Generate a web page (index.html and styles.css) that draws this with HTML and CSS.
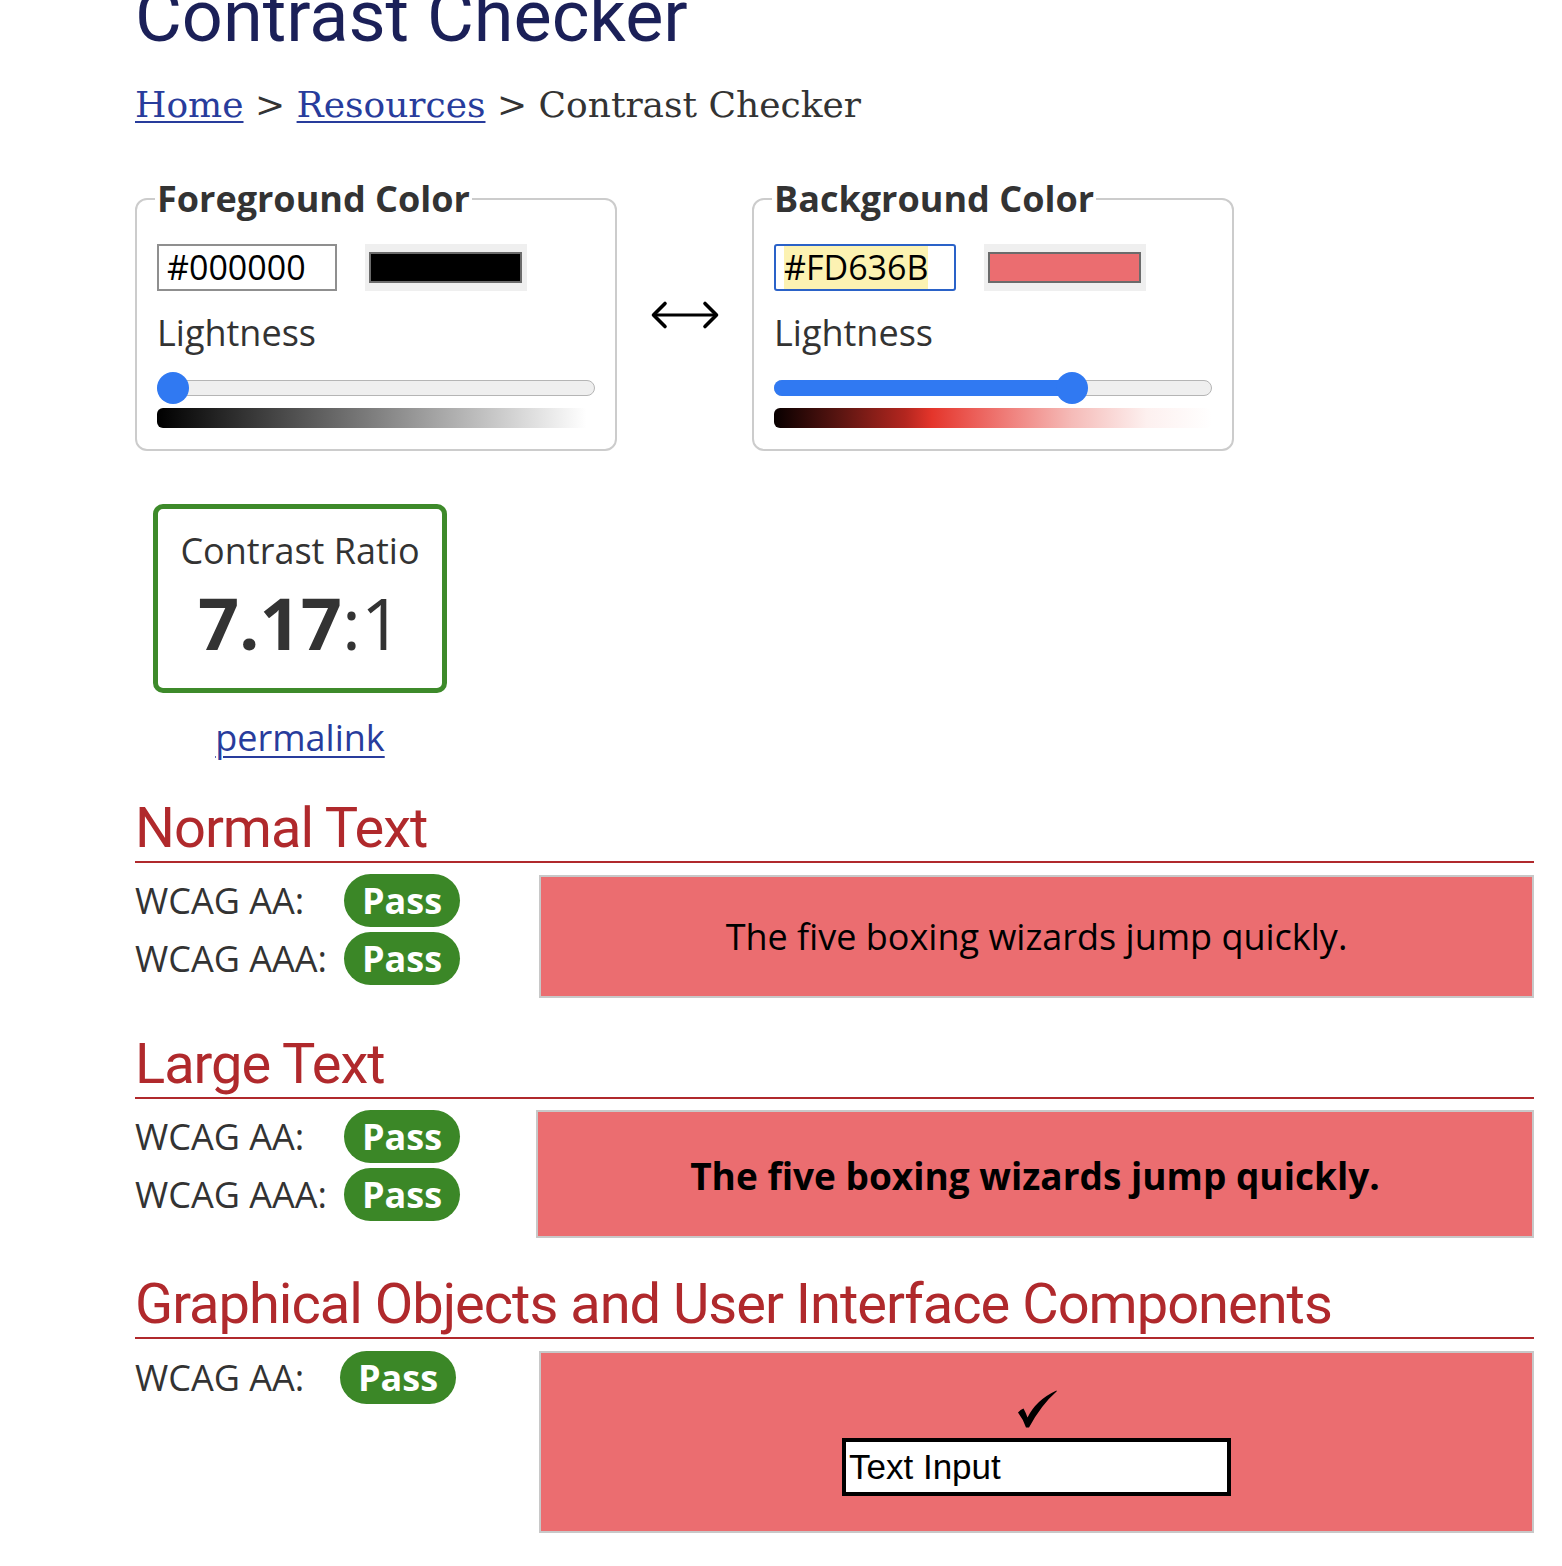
FILE: index.html
```html
<!DOCTYPE html>
<html lang="en">
<head>
<meta charset="utf-8">
<title>Contrast Checker</title>
<link rel="stylesheet" href="styles.css">
</head>
<body>
<main class="page">
  <h1 class="title">Contrast Checker</h1>
  <nav class="crumbs"><a href="#">Home</a> &gt; <a href="#">Resources</a> &gt; Contrast Checker</nav>

  <div class="pickers">
    <fieldset class="picker">
      <legend>Foreground Color</legend>
      <div class="color-row">
        <div class="hex">#000000</div>
        <div class="swatch-wrap"><span class="swatch" style="background:#000000"></span></div>
      </div>
      <div class="lightness-label">Lightness</div>
      <div class="slider">
        <div class="track"></div>
        <div class="thumb" style="left:0px"></div>
      </div>
      <div class="gradient gradient--fg"></div>
    </fieldset>

    <div class="swap">
      <svg width="70" height="30" viewBox="0 0 70 30" aria-hidden="true">
        <path d="M4 15 H66" fill="none" stroke="#000" stroke-width="3.2"/>
        <path d="M15 3.5 L3.5 15 L15 26.5" fill="none" stroke="#000" stroke-width="3.6" stroke-linecap="round" stroke-linejoin="round"/>
        <path d="M55 3.5 L66.5 15 L55 26.5" fill="none" stroke="#000" stroke-width="3.6" stroke-linecap="round" stroke-linejoin="round"/>
      </svg>
    </div>

    <fieldset class="picker">
      <legend>Background Color</legend>
      <div class="color-row">
        <div class="hex hex--focus"><span class="hex-sel">#FD636B</span></div>
        <div class="swatch-wrap"><span class="swatch" style="background:#eb6d70"></span></div>
      </div>
      <div class="lightness-label">Lightness</div>
      <div class="slider">
        <div class="track"></div>
        <div class="fill" style="width:298px"></div>
        <div class="thumb" style="left:282px"></div>
      </div>
      <div class="gradient gradient--bg"></div>
    </fieldset>
  </div>

  <div class="ratio-block">
    <div class="ratio-box">
      <div class="ratio-label">Contrast Ratio</div>
      <div class="ratio-value"><b>7.17</b>:1</div>
    </div>
    <a class="permalink" href="#">permalink</a>
  </div>

  <section class="result">
    <h2 class="result-title">Normal Text</h2>
    <div class="result-body">
      <div class="checks">
        <div class="check"><span class="check-label">WCAG AA:</span><span class="badge">Pass</span></div>
        <div class="check"><span class="check-label">WCAG AAA:</span><span class="badge">Pass</span></div>
      </div>
      <div class="sample sample--normal">The five boxing wizards jump quickly.</div>
    </div>
  </section>

  <section class="result result--large">
    <h2 class="result-title">Large Text</h2>
    <div class="result-body">
      <div class="checks">
        <div class="check"><span class="check-label">WCAG AA:</span><span class="badge">Pass</span></div>
        <div class="check"><span class="check-label">WCAG AAA:</span><span class="badge">Pass</span></div>
      </div>
      <div class="sample sample--large">The five boxing wizards jump quickly.</div>
    </div>
  </section>

  <section class="result result--ui">
    <h2 class="result-title">Graphical Objects and User Interface Components</h2>
    <div class="result-body">
      <div class="checks">
        <div class="check"><span class="check-label">WCAG AA:</span><span class="badge">Pass</span></div>
      </div>
      <div class="sample sample--ui">
        <svg class="tick" width="40" height="38" viewBox="0 0 40 38" aria-hidden="true">
          <path d="M1 22.5 Q3.5 19.5 6.5 18.5 Q8.5 22 10.5 27.5 Q19 10 39.5 0.5 L39.8 1.2 Q24 15 12 37.5 L9 37.5 Q6 29 1 22.5 Z" fill="#000"/>
        </svg>
        <div class="text-input">Text Input</div>
      </div>
    </div>
  </section>
</main>
</body>
</html>
```

FILE: styles.css
```css
html, body {
  margin: 0;
  padding: 0;
  background: #ffffff;
}

body {
  font-family: "Open Sans", "Noto Sans", sans-serif;
  color: #333333;
}

.page {
  width: 1399px;
  margin-left: 135px;
  padding-bottom: 40px;
}

.title {
  font-family: Roboto, "Noto Sans", sans-serif;
  font-weight: 400;
  font-size: 72px;
  line-height: 84px;
  color: #1b2058;
  margin: -25px 0 0 0;
}

.crumbs {
  font-family: "DejaVu Serif", "Liberation Serif", serif;
  font-size: 36px;
  line-height: 42px;
  color: #333333;
  margin-top: 25px;
}

.crumbs a {
  color: #283c9c;
  text-decoration: underline;
  text-decoration-thickness: 2px;
  text-underline-offset: 4px;
}

.pickers {
  display: flex;
  align-items: center;
  margin-top: 48px;
}

.picker {
  margin: 0;
  width: 438px;
  padding: 21px 20px 21px 20px;
  border: 2px solid #cccccc;
  border-radius: 12px;
  min-inline-size: 0;
}

.picker legend {
  font-size: 36px;
  font-weight: 700;
  line-height: 49px;
  color: #333333;
  padding: 0 2px;
  margin-left: -2px;
}

.color-row {
  display: flex;
  gap: 28px;
  height: 47px;
}

.hex {
  box-sizing: border-box;
  width: 180px;
  height: 47px;
  border: 2px solid #8f8f8f;
  padding: 0 8px;
  font-size: 34px;
  line-height: 43px;
  color: #000000;
  background: #ffffff;
}

.hex--focus {
  border-color: #2a62c8;
  border-radius: 3px;
  width: 182px;
}

.hex-sel {
  display: inline-block;
  background: #fcf2b2;
  line-height: 43px;
}

.swatch-wrap {
  box-sizing: border-box;
  width: 162px;
  height: 47px;
  background: #efefef;
  padding: 8px 5px 8px 4px;
}

.swatch {
  display: block;
  box-sizing: border-box;
  width: 100%;
  height: 31px;
  border: 2px solid #6b6b6b;
}

.lightness-label {
  font-size: 36px;
  line-height: 49px;
  color: #333333;
  margin-top: 17px;
}

.slider {
  position: relative;
  height: 32px;
  margin-top: 15px;
}

.track {
  position: absolute;
  left: 0;
  right: 0;
  top: 8px;
  height: 16px;
  box-sizing: border-box;
  border: 1px solid #b5b5b5;
  border-radius: 8px;
  background: #efefef;
}

.fill {
  position: absolute;
  left: 0;
  top: 8px;
  height: 16px;
  border-radius: 8px;
  background: #3079f2;
}

.thumb {
  position: absolute;
  top: 0;
  width: 32px;
  height: 32px;
  border-radius: 50%;
  background: #3079f2;
}

.gradient {
  height: 20px;
  margin-top: 4px;
  border-radius: 6px;
}

.gradient--fg {
  background: linear-gradient(to right, #000000 0%, #808080 50%, #ffffff 98%);
}

.gradient--bg {
  background: linear-gradient(to right,
    #080000 0%,
    #5a1511 15%,
    #b3261f 30%,
    #e4352b 36%,
    #eb5b55 45%,
    #f08581 55%,
    #f5bbb8 68%,
    #fdf0ef 85%,
    #ffffff 100%);
}

.swap {
  width: 135px;
  display: flex;
  justify-content: center;
  padding-top: 5px;
}

.swap svg {
  display: block;
}

.ratio-block {
  width: 294px;
  margin: 53px 0 0 18px;
  text-align: center;
}

.ratio-box {
  box-sizing: border-box;
  height: 189px;
  border: 5px solid #3d8a2a;
  border-radius: 10px;
  padding-top: 17px;
}

.ratio-label {
  font-size: 36px;
  line-height: 49px;
  color: #333333;
}

.ratio-value {
  font-size: 72px;
  line-height: 74px;
  margin-top: 10px;
  color: #333333;
}

.ratio-value b {
  font-weight: 700;
}

.permalink {
  display: inline-block;
  margin-top: 20px;
  font-size: 36px;
  line-height: 49px;
  color: #283c9c;
  text-decoration: underline;
  text-decoration-thickness: 2px;
  text-underline-offset: 5px;
}

.result {
  margin-top: 33px;
}

.result-title {
  font-family: Roboto, "Noto Sans", sans-serif;
  font-weight: 400;
  font-size: 56px;
  line-height: 66px;
  letter-spacing: -1px;
  color: #b0292c;
  margin: 0;
  border-bottom: 2px solid #b0292c;
}

.result-body {
  display: flex;
  align-items: flex-start;
  margin-top: 11px;
}

.checks {
  width: 404px;
  flex: none;
  display: flex;
  flex-direction: column;
  gap: 5px;
}

.result--large .checks {
  width: 401px;
}

.result--ui .result-body {
  margin-top: 12px;
}

.check {
  display: flex;
  align-items: center;
  height: 53px;
}

.check-label {
  width: 209px;
  flex: none;
  font-size: 36px;
  line-height: 49px;
  color: #333333;
}

.result--ui .check-label {
  width: 205px;
}

.badge {
  width: 116px;
  height: 53px;
  border-radius: 27px;
  background: #3b8727;
  color: #ffffff;
  font-weight: 700;
  font-size: 36px;
  line-height: 53px;
  text-align: center;
}

.sample {
  flex: 1;
  box-sizing: border-box;
  border: 2px solid #c8c8c8;
  background: #eb6d70;
  color: #000000;
  display: flex;
  align-items: center;
  justify-content: center;
}

.sample--normal {
  height: 123px;
  margin-top: 1px;
  font-size: 36px;
}

.sample--large {
  height: 128px;
  font-size: 37px;
  font-weight: 700;
  padding-top: 2px;
}

.sample--ui {
  height: 182px;
  flex-direction: column;
  justify-content: flex-start;
  padding-top: 37px;
}

.tick {
  display: block;
}

.text-input {
  box-sizing: border-box;
  width: 389px;
  height: 58px;
  margin-top: 10px;
  border: 4px solid #000000;
  background: #ffffff;
  padding-left: 3px;
  font-family: "Liberation Sans", Arial, sans-serif;
  font-size: 35px;
  line-height: 50px;
  color: #000000;
}
```
